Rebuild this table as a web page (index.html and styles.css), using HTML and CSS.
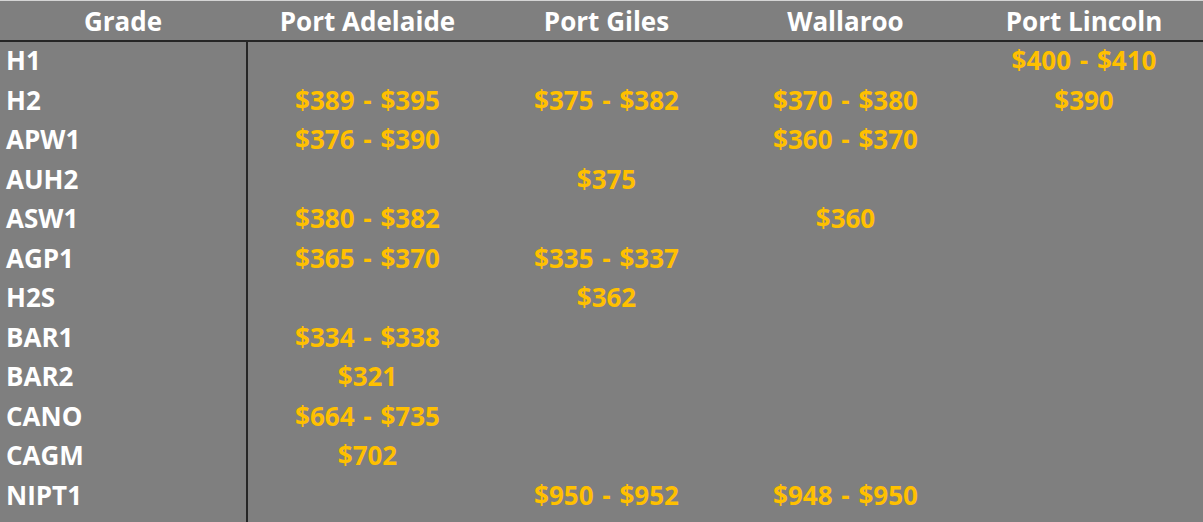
FILE: index.html
```html
<!DOCTYPE html>
<html lang="en">
<head>
<meta charset="utf-8">
<title>Grain prices</title>
<link rel="stylesheet" href="styles.css">
</head>
<body>
<div class="sheet">
  <div class="head">
    <div class="hcell grade">Grade</div>
    <div class="hcell">Port Adelaide</div>
    <div class="hcell">Port Giles</div>
    <div class="hcell">Wallaroo</div>
    <div class="hcell last">Port Lincoln</div>
  </div>
  <div class="main">
    <div class="labels">
      <div class="lab">H1</div>
      <div class="lab">H2</div>
      <div class="lab">APW1</div>
      <div class="lab">AUH2</div>
      <div class="lab">ASW1</div>
      <div class="lab">AGP1</div>
      <div class="lab">H2S</div>
      <div class="lab">BAR1</div>
      <div class="lab">BAR2</div>
      <div class="lab">CANO</div>
      <div class="lab">CAGM</div>
      <div class="lab">NIPT1</div>
    </div>
    <div class="values">
      <div class="v"></div><div class="v"></div><div class="v"></div><div class="v">$400 - $410</div>
      <div class="v">$389 - $395</div><div class="v">$375 - $382</div><div class="v">$370 - $380</div><div class="v">$390</div>
      <div class="v">$376 - $390</div><div class="v"></div><div class="v">$360 - $370</div><div class="v"></div>
      <div class="v"></div><div class="v">$375</div><div class="v"></div><div class="v"></div>
      <div class="v">$380 - $382</div><div class="v"></div><div class="v">$360</div><div class="v"></div>
      <div class="v">$365 - $370</div><div class="v">$335 - $337</div><div class="v"></div><div class="v"></div>
      <div class="v"></div><div class="v">$362</div><div class="v"></div><div class="v"></div>
      <div class="v">$334 - $338</div><div class="v"></div><div class="v"></div><div class="v"></div>
      <div class="v">$321</div><div class="v"></div><div class="v"></div><div class="v"></div>
      <div class="v">$664 - $735</div><div class="v"></div><div class="v"></div><div class="v"></div>
      <div class="v">$702</div><div class="v"></div><div class="v"></div><div class="v"></div>
      <div class="v"></div><div class="v">$950 - $952</div><div class="v">$948 - $950</div><div class="v"></div>
    </div>
  </div>
</div>
</body>
</html>
```
FILE: styles.css
```css
html, body {
  margin: 0;
  padding: 0;
  background: #7f7f7f;
}
body {
  width: 1203px;
  height: 522px;
  overflow: hidden;
  font-family: "Open Sans", "Liberation Sans", sans-serif;
  font-weight: 700;
  font-size: 26px;
}
.sheet {
  display: flex;
  flex-direction: column;
  height: 522px;
  border-top: 1px solid #d4d4d4;
  box-sizing: border-box;
}
.head {
  display: grid;
  grid-template-columns: 248px 239px 239px 239px 1fr;
  height: 39px;
  padding-top: 1px;
  box-sizing: border-box;
  border-bottom: 2px solid #262626;
  height: 41px;
  color: #ffffff;
}
.hcell {
  display: flex;
  align-items: center;
  justify-content: center;
  line-height: 1;
}
.hcell.grade {
  padding-right: 2px;
}
.main {
  flex: 1;
  display: flex;
}
.labels {
  width: 246px;
  border-right: 2px solid #262626;
  color: #ffffff;
}
.lab {
  height: 39.5px;
  display: flex;
  align-items: center;
  padding-left: 6px;
  padding-bottom: 3px;
  box-sizing: border-box;
  line-height: 1;
}
.values {
  flex: 1;
  display: grid;
  grid-template-columns: 239px 239px 239px 1fr;
  grid-auto-rows: 39.5px;
  align-content: start;
  color: #ffc000;
  word-spacing: 2px;
}
.v {
  display: flex;
  align-items: center;
  justify-content: center;
  padding-bottom: 3px;
  box-sizing: border-box;
  line-height: 1;
}
```
